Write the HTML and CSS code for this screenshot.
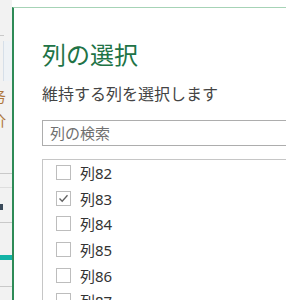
FILE: index.html
```html
<!doctype html>
<html>
<head>
	<meta charset="utf-8" />
	<title>列の選択</title>
	<link rel="stylesheet" href="styles.css">
</head>
<body>
	<aside class="sheet">
		<div class="sheet-top"></div>
		<div class="sheet-rule short"></div>
		<div class="sheet-sel"></div>
		<div class="sheet-text orange">务</div>
		<div class="sheet-text orange">价</div>
		<div class="sheet-rule"></div>
		<div class="sheet-rule light"></div>
		<div class="sheet-mark"></div>
		<div class="sheet-rule gap"></div>
		<div class="sheet-teal"></div>
		<div class="sheet-rule low"></div>
	</aside>

	<main class="dialog">
		<h1 class="title">列の選択</h1>
		<p class="subtitle">維持する列を選択します</p>
		<div class="search">列の検索</div>

		<ul class="cols">
			<li><span class="box"></span>列82</li>
			<li><span class="box"><svg width="15" height="15" viewBox="0 0 15 15"><polyline points="3.5,7.5 6.2,10.3 11.5,4.2" fill="none" stroke="#606060" stroke-width="1.3"/></svg></span>列83</li>
			<li><span class="box"></span>列84</li>
			<li><span class="box"></span>列85</li>
			<li><span class="box"></span>列86</li>
			<li><span class="box"></span>列87</li>
		</ul>
	</main>
</body>
</html>
```

FILE: styles.css
```css
*, *::before, *::after {
	box-sizing: border-box;
}

html, body {
	margin: 0;
	padding: 0;
}

body {
	width: 286px;
	height: 300px;
	overflow: hidden;
	display: flex;
	background: #fff;
	font-family: "Noto Sans", "Noto Sans CJK JP", sans-serif;
}

/* the spreadsheet peeking out on the left */
.sheet {
	width: 12px;
	flex: none;
	background: #f2f2f2;
	overflow: hidden;
	display: flex;
	flex-direction: column;
}

.sheet-top {
	height: 35px;
}

.sheet-rule {
	height: 1px;
	background: #c9c9c9;
	margin-top: 44px;
}

.sheet-rule.short {
	width: 4px;
	margin-top: 0;
}

.sheet-sel {
	height: 40px;
	margin-top: 5px;
	margin-left: 3px;
	border-left: 1px solid #d6dfe9;
	background: #eef2f6;
}

.sheet-text {
	font-size: 15px;
	line-height: 18px;
	margin-left: -9px;
	margin-top: 6px;
}

.orange {
	color: #b0773c;
}

.sheet-rule.light {
	background: #dedede;
	margin-top: 13px;
}

.sheet-mark {
	width: 3px;
	height: 6px;
	margin-top: 16px;
	background: #3a4a5a;
}

.sheet-rule.gap {
	margin-top: 12px;
}

.sheet-teal {
	height: 5px;
	margin-top: 32px;
	background: #13b3a6;
}

.sheet-rule.low {
	margin-top: 26px;
}

/* dialog */
.dialog {
	flex: 1;
	margin-top: 7px;
	border-left: 2px solid #2e8b57;
	border-top: 1px solid #a6d3b6;
	padding: 31px 0 0 28px;
	min-width: 0;
}

.title {
	margin: 0;
	font-size: 24px;
	line-height: 32px;
	font-weight: normal;
	color: #217346;
	white-space: nowrap;
}

.subtitle {
	margin: 12px 0 0;
	font-size: 16px;
	line-height: 22px;
	color: #444;
	white-space: nowrap;
}

.search {
	margin: 15px -10px 0 0;
	height: 26px;
	border: 1px solid #adadad;
	padding-left: 7px;
	font-size: 15px;
	line-height: 24px;
	color: #707070;
}

.cols {
	list-style: none;
	margin: 13px -10px 0 0;
	padding: 0 0 0 13px;
	border: 1px solid #c6c6c6;
	border-right: 0;
	height: 200px;
}

.cols li {
	display: flex;
	align-items: center;
	gap: 9px;
	height: 25.6px;
	font-size: 15px;
	color: #333;
}

.box {
	width: 15px;
	height: 15px;
	flex: none;
	border: 1px solid #bdbdbd;
	background: #fff;
	display: flex;
	align-items: center;
	justify-content: center;
}

.box svg {
	display: block;
	flex: none;
}
```
